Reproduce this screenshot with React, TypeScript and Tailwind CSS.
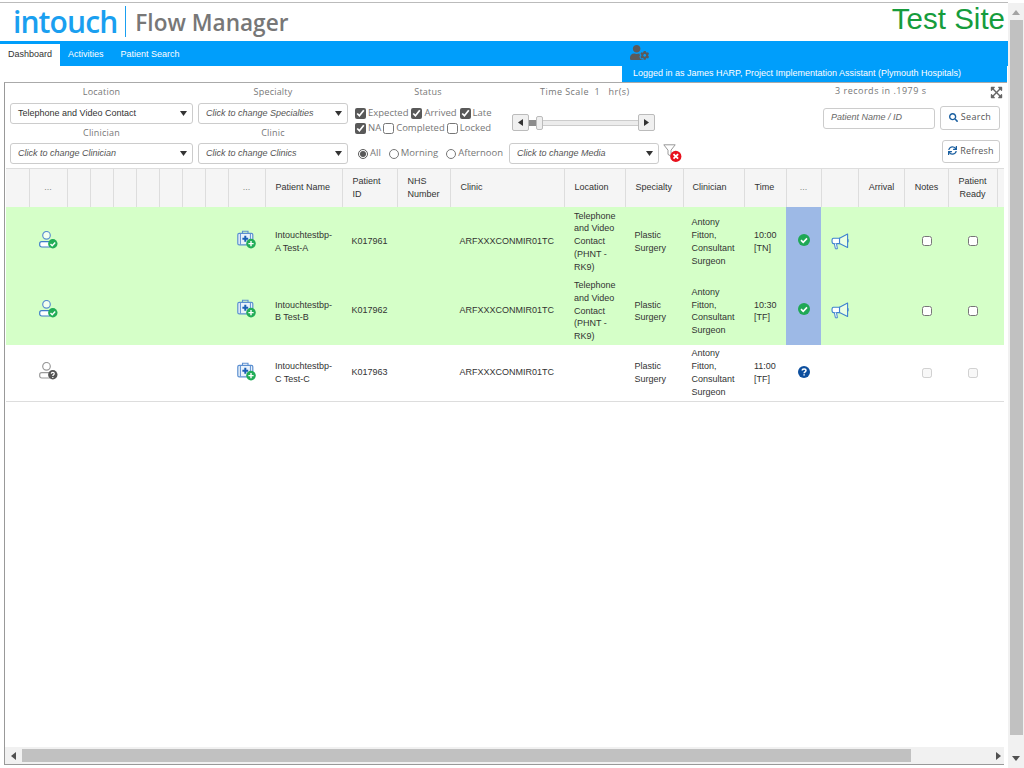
import { FaExpandArrowsAlt, FaSearch, FaSync, FaUserCog } from 'react-icons/fa';

const colWidths = [
    'w-[23px]', 'w-[38px]', 'w-[23px]', 'w-[23px]', 'w-[23px]', 'w-[23px]', 'w-[23px]', 'w-[23px]',
    'w-[23px]', 'w-[37px]', 'w-[77px]', 'w-[55px]', 'w-[53px]', 'w-[114px]', 'w-[61px]', 'w-[58px]',
    'w-[61px]', 'w-[42px]', 'w-[35px]', 'w-[37px]', 'w-[46px]', 'w-[44px]', 'w-[49px]', 'w-[7px]',
];

const headers: { label: string; cls: string }[] = [
    { label: '', cls: '' },
    { label: '...', cls: 'text-center text-[#888]' },
    { label: '', cls: '' },
    { label: '', cls: '' },
    { label: '', cls: '' },
    { label: '', cls: '' },
    { label: '', cls: '' },
    { label: '', cls: '' },
    { label: '', cls: '' },
    { label: '...', cls: 'text-center text-[#888]' },
    { label: 'Patient Name', cls: 'text-left pl-[10px] pr-[4px]' },
    { label: 'Patient ID', cls: 'text-left pl-[10px] pr-[10px]' },
    { label: 'NHS Number', cls: 'text-left pl-[10px] pr-[4px]' },
    { label: 'Clinic', cls: 'text-left pl-[10px]' },
    { label: 'Location', cls: 'text-left pl-[10px]' },
    { label: 'Specialty', cls: 'text-left pl-[10px]' },
    { label: 'Clinician', cls: 'text-left pl-[9px]' },
    { label: 'Time', cls: 'text-left pl-[10px]' },
    { label: '...', cls: 'text-center text-[#888]' },
    { label: '', cls: '' },
    { label: 'Arrival', cls: 'text-center pl-[1px]' },
    { label: 'Notes', cls: 'text-center pl-[1px]' },
    { label: 'Patient Ready', cls: 'text-center px-[6px]' },
    { label: '', cls: '' },
];

const rows = [
    { name: 'Intouchtestbp-A Test-A', id: 'K017961', location: 'Telephone and Video Contact (PHNT - RK9)', time: '10:00 [TN]', ok: true },
    { name: 'Intouchtestbp-B Test-B', id: 'K017962', location: 'Telephone and Video Contact (PHNT - RK9)', time: '10:30 [TF]', ok: true },
    { name: 'Intouchtestbp-C Test-C', id: 'K017963', location: '', time: '11:00 [TF]', ok: false },
];

function Caret() {
    return (
        <svg width="7" height="5" viewBox="0 0 7 5" className="shrink-0">
            <path d="M0 0h7L3.5 5z" fill="#333" />
        </svg>
    );
}

function Dropdown({ text, width, placeholder = true }: { text: string; width: string; placeholder?: boolean }) {
    return (
        <div className={`${width} h-[21px] flex items-center justify-between pl-[7px] pr-[5px] border border-[#ccc] rounded-[3px] bg-white text-[9px] ${placeholder ? 'italic text-[#555]' : 'text-[#333]'}`}>
            <span>{text}</span>
            <Caret />
        </div>
    );
}

function Label({ children }: { children: string }) {
    return <div className="pt-[1px] text-center text-[9px] leading-[16px] text-[#777] tracking-[0.2px] font-['Open_Sans',sans-serif]">{children}</div>;
}

function Check({ label, checked = false }: { label: string; checked?: boolean }) {
    return (
        <label className="flex items-center gap-[2px]">
            <input type="checkbox" defaultChecked={checked} className="m-0 w-[11px] h-[11px] accent-[#595959]" />
            <span>{label}</span>
        </label>
    );
}

function Radio({ label, checked = false }: { label: string; checked?: boolean }) {
    return (
        <label className="flex items-center gap-[2px]">
            <input type="radio" name="session" defaultChecked={checked} className="m-0 w-[10px] h-[10px] accent-[#595959]" />
            <span>{label}</span>
        </label>
    );
}

function SliderButton({ dir }: { dir: 'left' | 'right' }) {
    return (
        <div className="w-[17px] h-[17px] shrink-0 flex items-center justify-center border border-[#bbb] rounded-[2px] bg-[#f0f0f0]">
            <svg width="5" height="7" viewBox="0 0 5 7">
                <path d={dir === 'left' ? 'M5 0v7L0 3.5z' : 'M0 0v7l5-3.5z'} fill="#333" />
            </svg>
        </div>
    );
}

function UserStatus({ ok }: { ok: boolean }) {
    const head = ok ? '#5b8fd0' : '#9a9a9a';
    const body = ok ? '#3f7cc8' : '#9a9a9a';
    return (
        <svg width="19" height="18" viewBox="0 0 19 18" className="mx-auto">
            <circle cx="7.5" cy="4.3" r="3.8" fill="#fff" fillOpacity="0.7" stroke={head} strokeWidth="1.2" />
            <rect x="0.7" y="10.7" width="11" height="5.3" rx="2" fill="#fff" stroke={body} strokeWidth="1.2" />
            <circle cx="13.8" cy="12.8" r="4.7" fill={ok ? '#22ad57' : '#555'} />
            {ok ? (
                <path d="M11.5 13l1.7 1.7 3-3.2" fill="none" stroke="#fff" strokeWidth="1.4" />
            ) : (
                <path d="M12.3 11.8c0-2 3-2 3 0 0 1-1.5 1.1-1.5 2.2M13.8 15v1" fill="none" stroke="#fff" strokeWidth="1.2" />
            )}
        </svg>
    );
}

function Case() {
    return (
        <svg width="19" height="19" viewBox="0 0 19 19" className="mx-auto mb-[3px]">
            <path d="M5.5 3.5V1.2h5.5v2.3" fill="none" stroke="#5b8fd0" strokeWidth="1.1" />
            <rect x="0.8" y="3.4" width="15" height="11.4" rx="1.4" fill="#e9f2fb" stroke="#5b8fd0" strokeWidth="1.2" />
            <path d="M3.4 3.5v11M13.4 3.5v11" stroke="#5b8fd0" strokeWidth="1" />
            <path d="M8.3 5.8v6M5.4 8.8h5.8" stroke="#1a5fb4" strokeWidth="2" />
            <circle cx="14" cy="13.6" r="4.8" fill="#22ad57" />
            <path d="M14 11v5.2M11.4 13.6h5.2" stroke="#fff" strokeWidth="1.4" />
        </svg>
    );
}

function Megaphone() {
    return (
        <svg width="18" height="17" viewBox="0 0 18 17">
            <path d="M8.5 5.2L16.6 1v13.4L8.5 10.6z" fill="#fff" fillOpacity="0.5" stroke="#3f82d0" strokeWidth="1.1" strokeLinejoin="round" />
            <path d="M8.5 5.2H2.4C1.4 5.2 1 6 1 7.8s.4 2.8 1.4 2.8h6.1z" fill="#fff" stroke="#3f82d0" strokeWidth="1.1" />
            <path d="M3.4 10.6l1 5.2h2l-.9-5.2" fill="#fff" stroke="#3f82d0" strokeWidth="1" />
            <path d="M17 6.2v3" stroke="#3f82d0" strokeWidth="1.2" />
        </svg>
    );
}

function StatusDot({ ok }: { ok: boolean }) {
    return (
        <svg width="12" height="12" viewBox="0 0 12 12" className="mx-auto mb-[2px]">
            <circle cx="6" cy="6" r="6" fill={ok ? '#1fa855' : '#0d4f9e'} />
            {ok ? (
                <path d="M3 6.2l2.2 2.1L9 4.4" fill="none" stroke="#fff" strokeWidth="1.6" />
            ) : (
                <path d="M4.2 4.6c0-2.3 3.8-2.3 3.8 0 0 1.3-1.9 1.3-1.9 2.7M6.1 8.2v1.4" fill="none" stroke="#fff" strokeWidth="1.5" />
            )}
        </svg>
    );
}

function ClearFilter() {
    return (
        <svg width="20" height="20" viewBox="0 0 20 20" className="shrink-0">
            <path d="M0.8 0.8h11.4L8 6.2v6l-3-1.8V6.2z" fill="#fff" stroke="#999" strokeWidth="1" />
            <circle cx="12.8" cy="12.4" r="5.6" fill="#e8101c" />
            <path d="M10.5 10.1l4.6 4.6M15.1 10.1l-4.6 4.6" stroke="#fff" strokeWidth="1.8" />
        </svg>
    );
}

function Filters() {
    return (
        <div className="h-[85px] flex font-['Open_Sans',sans-serif]">
            <div className="w-[183px] ml-[5px] font-['Liberation_Sans',sans-serif]">
                <div className="h-[20px]"><Label>Location</Label></div>
                <Dropdown text="Telephone and Video Contact" width="w-[183px]" placeholder={false} />
                <div className="h-[19px]"><Label>Clinician</Label></div>
                <Dropdown text="Click to change Clinician" width="w-[183px]" />
            </div>
            <div className="w-[150px] ml-[5px] font-['Liberation_Sans',sans-serif]">
                <div className="h-[20px]"><Label>Specialty</Label></div>
                <Dropdown text="Click to change Specialties" width="w-[150px]" />
                <div className="h-[19px]"><Label>Clinic</Label></div>
                <Dropdown text="Click to change Clinics" width="w-[150px]" />
            </div>
            <div className="w-[154px] ml-[7px] text-[9.5px] text-[#777]">
                <div className="h-[23px] w-[146px]"><Label>Status</Label></div>
                <div className="flex h-[15px] items-center gap-[3px]">
                    <Check label="Expected" checked />
                    <Check label="Arrived" checked />
                    <Check label="Late" checked />
                </div>
                <div className="flex h-[15px] items-center gap-[2px]">
                    <Check label="NA" checked />
                    <Check label="Completed" />
                    <Check label="Locked" />
                </div>
                <div className="flex items-center gap-[8px] h-[21px] mt-[7px] ml-[3px]">
                    <Radio label="All" checked />
                    <Radio label="Morning" />
                    <Radio label="Afternoon" />
                </div>
            </div>
            <div className="w-[150px]">
                <div className="h-[20px] pl-[31px] pt-[1px] whitespace-pre text-[9px] leading-[16px] tracking-[0.45px] text-[#777]">{'Time Scale  1   hr(s)'}</div>
                <div className="flex items-center ml-[3px] w-[143px] h-[17px] mt-[11px]">
                    <SliderButton dir="left" />
                    <div className="w-[7px] h-[6px] bg-[#8c8c8c]" />
                    <div className="w-[7px] h-[14px] shrink-0 border border-[#bbb] rounded-[2px] bg-[#eee]" />
                    <div className="flex-1 h-[6px] border-y border-[#ccc] bg-[#ececec]" />
                    <SliderButton dir="right" />
                </div>
                <div className="mt-[12px] font-['Liberation_Sans',sans-serif]">
                    <Dropdown text="Click to change Media" width="w-[150px]" />
                </div>
            </div>
            <div className="ml-[4px] mt-[61px]"><ClearFilter /></div>
            <div className="ml-auto mr-[4px] w-[180px] font-['Open_Sans',sans-serif]">
                <div className="flex items-start h-[23px]">
                    <span className="ml-[12px] text-[9px] leading-[16px] tracking-[0.5px] text-[#777]">3 records in .1979 s</span>
                    <FaExpandArrowsAlt className="ml-auto mt-[3px] w-[13px] h-[13px] text-[#666]" />
                </div>
                <div className="flex items-center gap-[5px]">
                    <div className="w-[112px] h-[21px] flex items-center pl-[7px] pb-[1px] border border-[#ccc] rounded-[3px] text-[9px] italic text-[#666] font-['Liberation_Sans',sans-serif]">Patient Name / ID</div>
                    <div className="w-[60px] h-[24px] flex items-center justify-center gap-[3px] pb-[2px] border border-[#ccc] rounded-[3px] text-[9px] tracking-[0.3px] text-[#555]">
                        <FaSearch className="w-[9px] h-[9px] text-[#1a5fa0]" />Search
                    </div>
                </div>
                <div className="flex justify-end pr-[3px] mt-[10px]">
                    <div className="w-[58px] h-[23px] flex items-center justify-center gap-[3px] pb-[2px] border border-[#ccc] rounded-[3px] text-[9px] tracking-[0.2px] text-[#555]">
                        <FaSync className="w-[9px] h-[9px] text-[#1a5fa0]" />Refresh
                    </div>
                </div>
            </div>
        </div>
    );
}

function PatientTable() {
    return (
        <table className="ml-[1px] w-[998px] table-fixed border-collapse text-[9px] leading-[12.86px] text-[#333] font-['Liberation_Sans',sans-serif]">
            <colgroup>
                {colWidths.map((w, i) => (
                    <col key={i} className={w} />
                ))}
            </colgroup>
            <thead>
                <tr className="bg-[#f5f5f5] border-t border-[#ddd]">
                    {headers.map((h, i) => (
                        <th key={i} className={`h-[38px] py-0 font-normal border-r border-[#ddd] last:border-r-0 ${h.cls}`}>
                            {h.label}
                        </th>
                    ))}
                </tr>
            </thead>
            <tbody>
                {rows.map((r) => {
                    const shift = r.ok ? 'pt-[2px]' : '';
                    return (
                        <tr key={r.id} className={r.ok ? 'bg-[#d5ffc8]' : 'bg-white'}>
                            <td />
                            <td className="pb-[3px]"><UserStatus ok={r.ok} /></td>
                            <td colSpan={7} />
                            <td><Case /></td>
                            <td className={`pl-[10px] pr-[8px] ${shift}`}>{r.name}</td>
                            <td className="pl-[9.5px]">{r.id}</td>
                            <td />
                            <td className="pl-[9.5px]">ARFXXXCONMIR01TC</td>
                            <td className="pl-[10px] pr-[5px] pt-[3px] pb-[2px]">{r.location}</td>
                            <td className={`pl-[9.5px] pr-[5px] ${shift}`}>Plastic Surgery</td>
                            <td className={`pl-[8.5px] pr-[5px] ${r.ok ? 'pt-[2px]' : 'py-[2px]'}`}>Antony Fitton, Consultant Surgeon</td>
                            <td className={`pl-[10px] pr-[5px] ${shift}`}>{r.time}</td>
                            <td className={r.ok ? 'bg-[#9db9e6]' : ''}><StatusDot ok={r.ok} /></td>
                            <td className="pl-[10px]">{r.ok && <Megaphone />}</td>
                            <td />
                            <td className="pl-[1px] text-center align-middle"><input type="checkbox" disabled={!r.ok} className="m-0 align-middle w-[10px] h-[10px]" /></td>
                            <td className="text-center align-middle"><input type="checkbox" disabled={!r.ok} className="m-0 align-middle w-[10px] h-[10px]" /></td>
                            <td />
                        </tr>
                    );
                })}
                <tr className="border-t border-[#ddd]"><td colSpan={24} className="h-0 p-0" /></tr>
            </tbody>
        </table>
    );
}

export default function App() {
    return (
        <div className="w-[1024px] h-[768px] flex overflow-hidden bg-white font-['Liberation_Sans',sans-serif]">
            <div className="w-[1008px] mt-[2px] border-t border-[#bbb] flex flex-col">
                <header className="h-[38px] shrink-0 flex items-center justify-between pl-[13px] pr-[3px]">
                    <div className="flex items-center font-['Open_Sans',sans-serif]">
                        <span className="text-[30px] leading-none font-semibold tracking-[-0.9px] text-[#1a9ff0]">intouch</span>
                        <span className="w-[1px] h-[31px] bg-[#1a9ff0] ml-[8px] mr-[9px] -mt-[1px]" />
                        <span className="text-[22.6px] leading-none font-semibold text-[#777] mt-[3px]">Flow Manager</span>
                    </div>
                    <span className="text-[29.5px] leading-none text-[#169c3c] -mt-[6px]">Test Site</span>
                </header>
                <nav className="h-[25px] shrink-0 flex bg-[#009efb] text-[9px] text-white">
                    <div className="flex items-end h-full">
                        <div className="w-[60px] h-[22px] flex items-center justify-center bg-white text-[#333]">Dashboard</div>
                        <div className="ml-[8px] h-[22px] flex items-center">Activities</div>
                        <div className="ml-[17px] h-[22px] flex items-center">Patient Search</div>
                    </div>
                    <FaUserCog className="ml-[450px] mt-[3px] w-[19px] h-[17px] text-[#5a5a5a]" />
                </nav>
                <div className="h-[16px] shrink-0 ml-[622px] w-[385px] pl-[11px] flex items-center bg-[#009efb] text-[9px] text-white">
                    Logged in as James HARP, Project Implementation Assistant (Plymouth Hospitals)
                </div>
                <main className="ml-[4px] w-[1003px] h-[683px] border-t border-[#aaa] border-l border-l-[#999] flex flex-col">
                    <Filters />
                    <div className="flex-1 min-h-0">
                        <PatientTable />
                    </div>
                    <div className="h-[17px] w-[999px] flex items-center bg-[#f1f1f1]">
                        <svg width="5" height="8" viewBox="0 0 5 8" className="ml-[6px]"><path d="M5 0v8L0 4z" fill="#505050" /></svg>
                        <div className="ml-[6px] w-[889px] h-[13px] bg-[#c1c1c1]" />
                        <svg width="5" height="8" viewBox="0 0 5 8" className="ml-[85px]"><path d="M0 0v8l5-4z" fill="#505050" /></svg>
                    </div>
                    <div className="w-[999px] h-[1px] bg-[#999]" />
                </main>
            </div>
            <aside className="w-[16px] mt-[3px] flex flex-col items-center bg-[#f1f1f1]">
                <svg width="8" height="5" viewBox="0 0 8 5" className="mt-[7px]"><path d="M0 5h8L4 0z" fill="#a3a3a3" /></svg>
                <div className="ml-[1px] mt-[5px] w-[13px] h-[715px] bg-[#c1c1c1]" />
                <svg width="8" height="5" viewBox="0 0 8 5" className="mt-[21px]"><path d="M0 0h8L4 5z" fill="#505050" /></svg>
            </aside>
        </div>
    );
}
